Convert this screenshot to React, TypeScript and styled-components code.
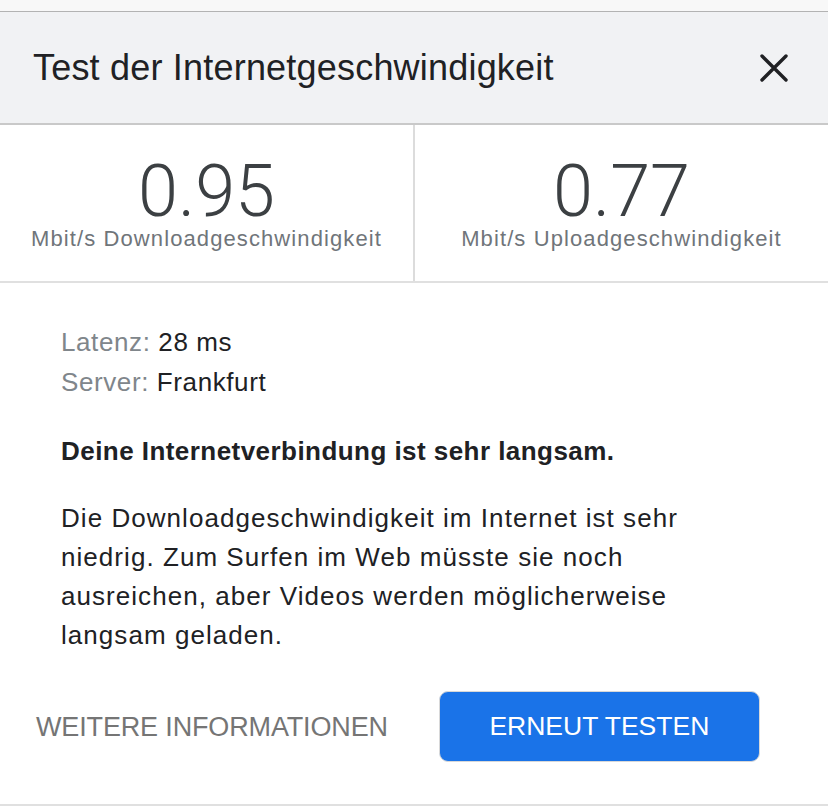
import React from "react";
import styled, { createGlobalStyle } from "styled-components";

const GlobalStyle = createGlobalStyle`
  html, body {
    margin: 0;
    padding: 0;
    background: #ffffff;
    font-family: "Liberation Sans", Arial, Helvetica, sans-serif;
    -webkit-font-smoothing: antialiased;
  }
  * { box-sizing: border-box; }
`;

const Page = styled.div`
  width: 828px;
  min-height: 812px;
  display: flex;
  flex-direction: column;
  background: #ffffff;
`;

const TopStrip = styled.div`
  height: 12px;
  background: #f8f8f8;
  border-bottom: 1px solid #b3b3b3;
`;

const Header = styled.header`
  height: 113px;
  background: #f1f2f4;
  border-bottom: 2px solid #c9c9c9;
  display: flex;
  align-items: center;
  justify-content: space-between;
  padding: 0 40px 0 33px;
`;

const Title = styled.h1`
  margin: 0;
  font-size: 36px;
  font-weight: 400;
  color: #202124;
  letter-spacing: 0.2px;
`;

const CloseButton = styled.button`
  width: 28px;
  height: 28px;
  padding: 0;
  border: none;
  background: transparent;
  display: flex;
  align-items: center;
  justify-content: center;
  cursor: pointer;
`;

const Stats = styled.section`
  display: grid;
  grid-template-columns: 413px 1fr;
  border-bottom: 2px solid #e0e0e0;
`;

const Stat = styled.div<{ $divider?: boolean }>`
  padding: 33px 0 31px;
  display: flex;
  flex-direction: column;
  align-items: center;
  border-left: ${(p) => (p.$divider ? "2px solid #dcdcdc" : "none")};
`;

const StatValue = styled.div`
  font-family: Roboto, "Liberation Sans", sans-serif;
  font-size: 72px;
  line-height: 68px;
  font-weight: 300;
  color: #3c4043;
`;

const StatLabel = styled.div`
  margin-top: 2px;
  font-size: 22px;
  line-height: 22px;
  color: #70757a;
  letter-spacing: 1.1px;
`;

const Body = styled.section`
  padding: 39px 61px 0 61px;
  display: flex;
  flex-direction: column;
`;

const InfoList = styled.div`
  display: flex;
  flex-direction: column;
`;

const InfoRow = styled.div`
  font-size: 26px;
  line-height: 40px;
  letter-spacing: 0.6px;
  color: #202124;
`;

const InfoKey = styled.span`
  color: #80868b;
`;

const Verdict = styled.p`
  margin: 29px 0 0;
  font-size: 26px;
  line-height: 40px;
  font-weight: 700;
  letter-spacing: 0.45px;
  color: #202124;
`;

const Description = styled.p`
  margin: 28px 0 0;
  max-width: 670px;
  font-size: 26px;
  line-height: 39px;
  letter-spacing: 1.05px;
  color: #202124;
`;

const Actions = styled.div`
  display: flex;
  align-items: center;
  gap: 51px;
  padding: 36px 0 42px 36px;
  border-bottom: 2px solid #e0e0e0;
`;

const LinkButton = styled.button`
  border: none;
  background: transparent;
  padding: 0;
  font-family: inherit;
  font-size: 27px;
  line-height: 70px;
  color: #757575;
  letter-spacing: -0.15px;
  cursor: pointer;
`;

const PrimaryButton = styled.button`
  width: 321px;
  height: 71px;
  border: 1px solid #d8d8d8;
  border-radius: 9px;
  background: #1a73e8;
  color: #ffffff;
  font-family: inherit;
  font-size: 26.5px;
  cursor: pointer;
  padding: 0;
`;

const CloseIcon = () => (
  <svg width="28" height="28" viewBox="0 0 28 28" fill="none">
    <path
      d="M2 2 L26 26 M26 2 L2 26"
      stroke="#202124"
      strokeWidth="3.4"
      strokeLinecap="round"
    />
  </svg>
);

export default function App() {
  return (
    <Page>
      <GlobalStyle />
      <TopStrip />
      <Header>
        <Title>Test der Internetgeschwindigkeit</Title>
        <CloseButton aria-label="Schließen">
          <CloseIcon />
        </CloseButton>
      </Header>
      <Stats>
        <Stat>
          <StatValue>0.95</StatValue>
          <StatLabel>Mbit/s Downloadgeschwindigkeit</StatLabel>
        </Stat>
        <Stat $divider>
          <StatValue>0.77</StatValue>
          <StatLabel>Mbit/s Uploadgeschwindigkeit</StatLabel>
        </Stat>
      </Stats>
      <Body>
        <InfoList>
          <InfoRow>
            <InfoKey>Latenz:</InfoKey> 28 ms
          </InfoRow>
          <InfoRow>
            <InfoKey>Server:</InfoKey> Frankfurt
          </InfoRow>
        </InfoList>
        <Verdict>Deine Internetverbindung ist sehr langsam.</Verdict>
        <Description>
          Die Downloadgeschwindigkeit im Internet ist sehr niedrig. Zum Surfen
          im Web müsste sie noch ausreichen, aber Videos werden möglicherweise
          langsam geladen.
        </Description>
      </Body>
      <Actions>
        <LinkButton>WEITERE INFORMATIONEN</LinkButton>
        <PrimaryButton>ERNEUT TESTEN</PrimaryButton>
      </Actions>
    </Page>
  );
}
